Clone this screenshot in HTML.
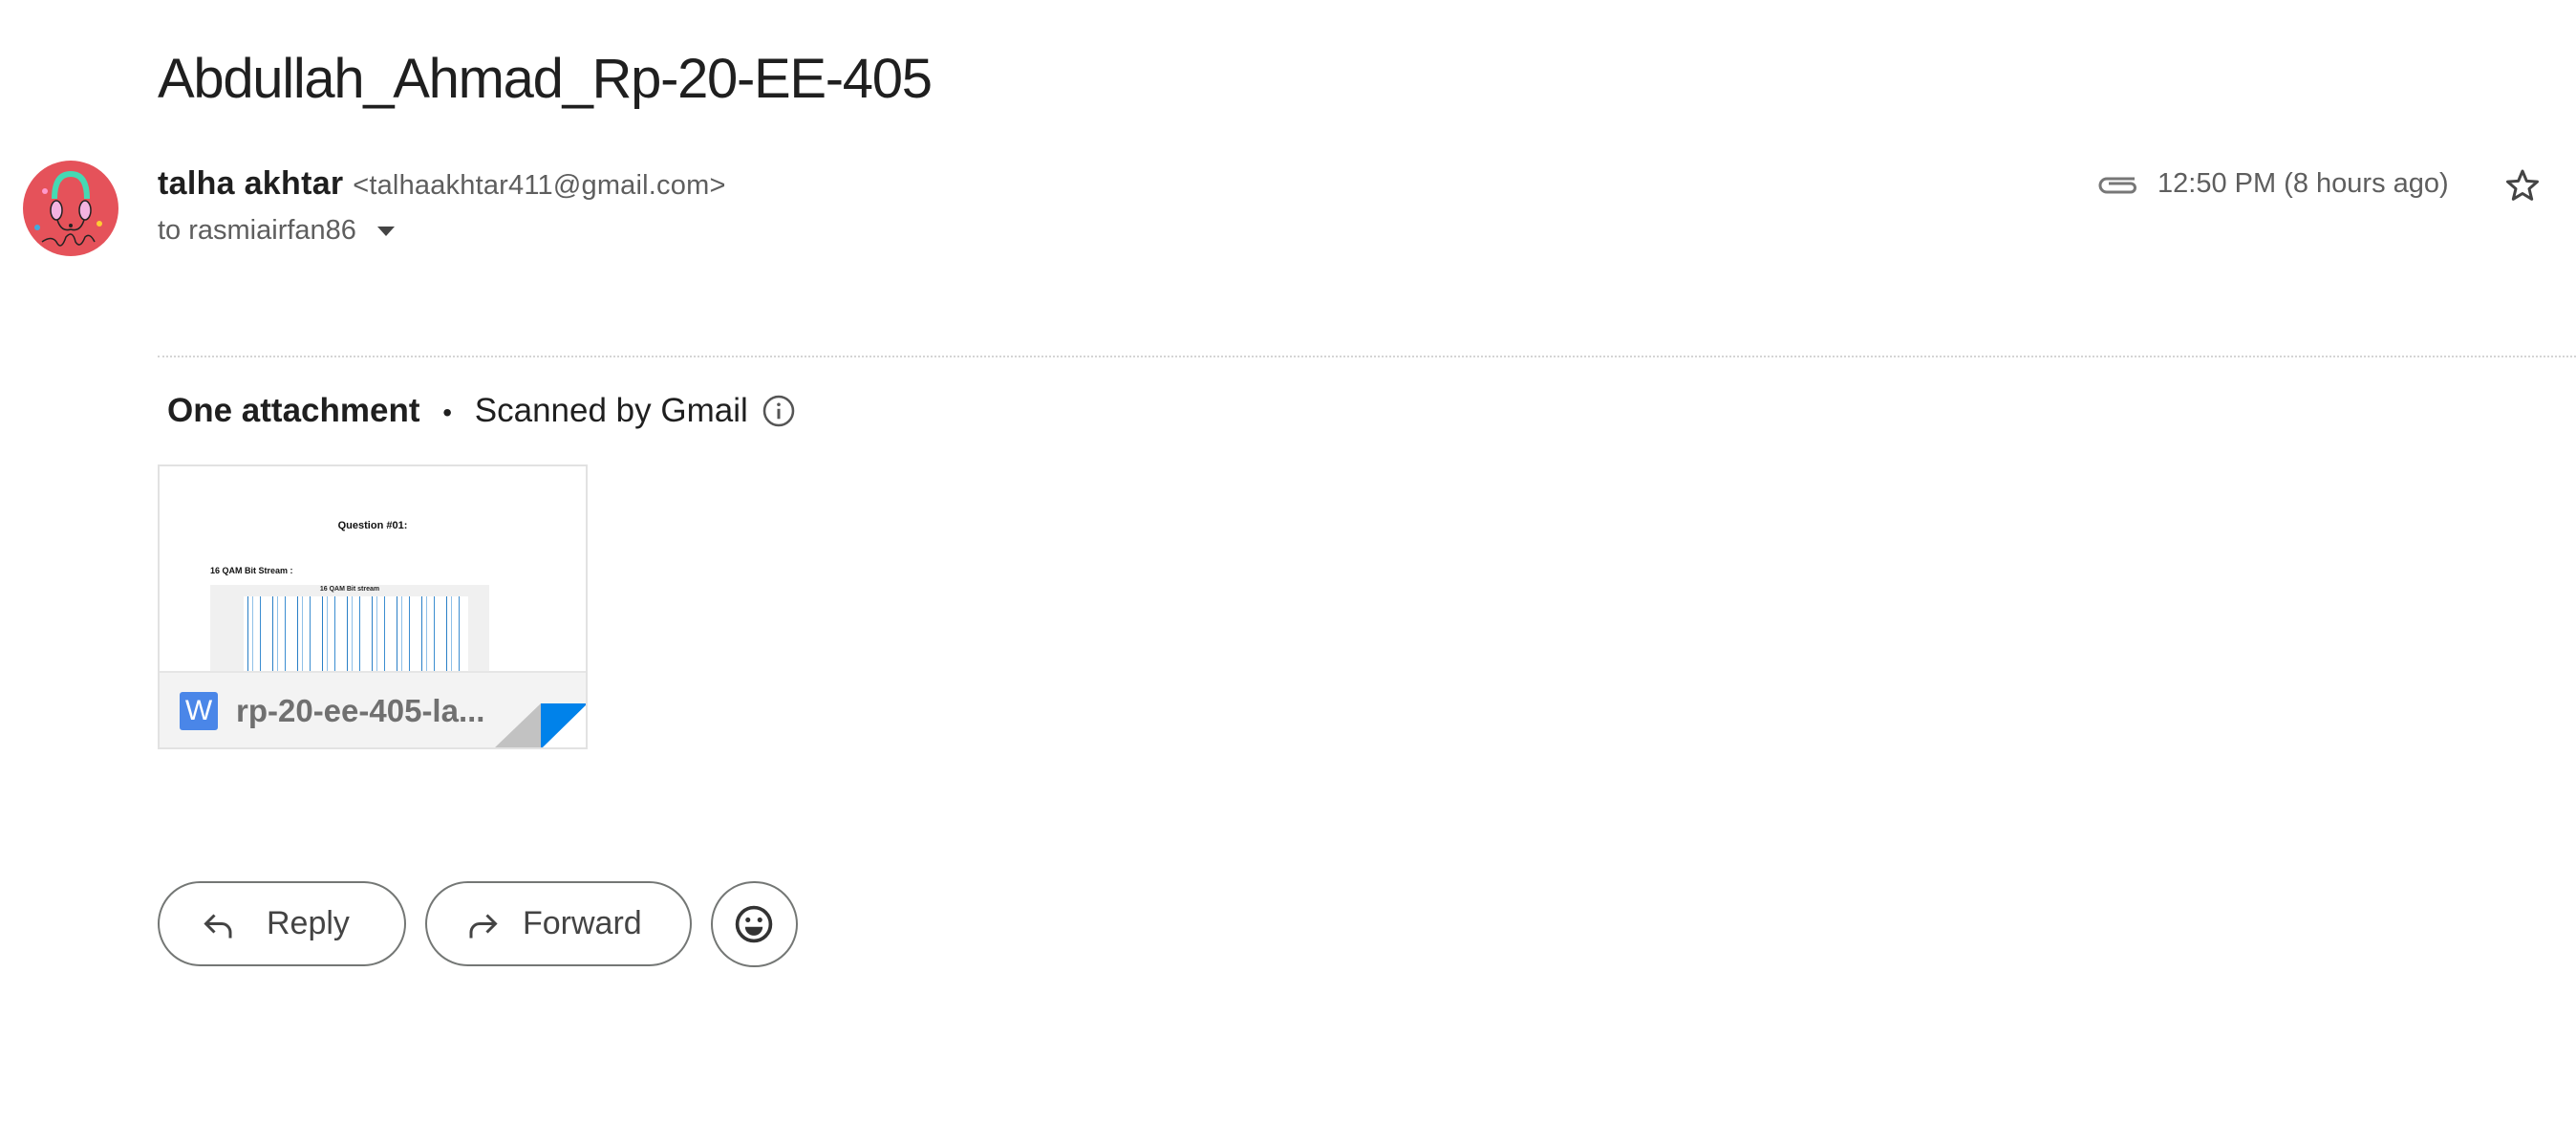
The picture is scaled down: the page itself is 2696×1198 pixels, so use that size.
<!DOCTYPE html>
<html><head><meta charset="utf-8"><style>
*{margin:0;padding:0;box-sizing:border-box}
body{width:2696px;height:1198px;background:#fff;font-family:"Liberation Sans",sans-serif;position:relative;overflow:hidden;color:#1f1f1f}
.a{position:absolute;white-space:nowrap}
.title{left:165px;top:50px;font-size:58px;letter-spacing:-1.3px;color:#1f1f1f;line-height:66px}
.name{left:165px;top:172px;font-size:34px;font-weight:bold;line-height:40px;letter-spacing:0.3px}
.email{font-size:29px;font-weight:normal;color:#5e5e5e;letter-spacing:0.2px}
.to{left:165px;top:224px;font-size:29px;color:#5e5e5e;line-height:34px}
.time{left:2258px;top:175px;font-size:29px;color:#5e5e5e;line-height:34px}
.div{left:165px;top:372px;width:2531px;border-top:2px dotted #d5d5d5}
.att{left:175px;top:410px;font-size:35px;line-height:40px}
.card{left:165px;top:486px;width:450px;height:298px;border:2px solid #e2e2e2;background:#fff;overflow:hidden}
.foot{position:absolute;left:0;top:214px;width:446px;height:82px;background:#f3f3f3;border-top:2px solid #e6e6e6}
.btn{position:absolute;top:922px;height:89px;border:2px solid #747775;border-radius:45px;font-size:34px;color:#444;line-height:85px}
</style></head><body>
<div class="a title">Abdullah_Ahmad_Rp-20-EE-405</div>
<svg class="a" style="left:24px;top:168px" width="100" height="100" viewBox="0 0 100 100">
<circle cx="50" cy="50" r="50" fill="#e5525a"/>
<path d="M33 40 Q33 14 50 14 Q67 14 67 40" stroke="#46d9b3" stroke-width="6" fill="none"/>
<ellipse cx="35" cy="52" rx="6" ry="10" fill="#f3b3e0" stroke="#222" stroke-width="1.5"/>
<ellipse cx="65" cy="52" rx="6" ry="10" fill="#f3b3e0" stroke="#222" stroke-width="1.5"/>
<path d="M36 62 Q40 75 50 72 Q60 75 64 62 M20 85 Q30 78 35 85 Q40 95 45 80 Q52 72 55 85 Q60 93 65 80 Q70 75 75 85" stroke="#222" stroke-width="1.5" fill="none"/>
<circle cx="50" cy="68" r="2" fill="#222"/><circle cx="15" cy="70" r="3" fill="#4ad"/><circle cx="80" cy="66" r="3" fill="#fc3"/><circle cx="23" cy="32" r="3" fill="#f9c"/>
</svg>
<div class="a name">talha akhtar <span class="email">&lt;talhaakhtar411@gmail.com&gt;</span></div>
<div class="a to">to rasmiairfan86 <span style="display:inline-block;width:0;height:0;border-left:9px solid transparent;border-right:9px solid transparent;border-top:10px solid #444;margin-left:14px;vertical-align:middle"></span></div>
<svg class="a" style="left:2194px;top:178px" width="44" height="26" viewBox="0 0 44 26"><path d="M40 9 H11 A7 7 0 0 0 11 23 H36 A4.5 4.5 0 0 0 36 14 H13" fill="none" stroke="#777" stroke-width="3"/></svg>
<div class="a time">12:50 PM (8 hours ago)</div>
<svg class="a" style="left:2620px;top:174px" width="40" height="40" viewBox="0 0 24 24"><path d="M12 3 L14.6 9.2 L21.3 9.7 L16.2 14.1 L17.8 20.6 L12 17.1 L6.2 20.6 L7.8 14.1 L2.7 9.7 L9.4 9.2 Z" fill="none" stroke="#444" stroke-width="1.8" stroke-linejoin="round"/></svg>
<div class="a div"></div>
<div class="a att"><b>One attachment</b> <span style="margin:0 14px;font-size:28px">•</span> Scanned by Gmail</div>
<svg class="a" style="left:797px;top:412px" width="36" height="36" viewBox="0 0 24 24"><circle cx="12" cy="12" r="10" fill="none" stroke="#555" stroke-width="1.7"/><rect x="11" y="10.5" width="2" height="7" fill="#555"/><circle cx="12" cy="7.5" r="1.2" fill="#555"/></svg>
<div class="a card">
<div class="a" style="left:0;width:446px;top:56px;text-align:center;font-size:11px;font-weight:bold;color:#111">Question #01:</div>
<div class="a" style="left:53px;top:104px;font-size:9px;font-weight:bold;color:#111">16 QAM Bit Stream :</div>
<div class="a" style="left:53px;top:124px;width:292px;height:100px;background:#f0f0f0">
<div class="a" style="left:0;width:292px;top:1px;text-align:center;font-size:7px;font-weight:bold">16 QAM Bit stream</div>
<div class="a" style="left:35px;top:12px;width:235px;height:90px;background:repeating-linear-gradient(90deg,#fff 0 4px,#2a7fc6 4px 5px,#fff 5px 9px,#8fc0e8 9px 10px,#fff 10px 17px,#3b8dd0 17px 18px,#fff 18px 26px)"></div>
</div>
<div class="foot">
<div class="a" style="left:21px;top:20px;width:40px;height:40px;background:#4a86e8;border-radius:3px;color:#fff;font-size:30px;line-height:40px;text-align:center">W</div>
<div class="a" style="left:80px;top:18px;font-size:33px;font-weight:bold;color:#707070;line-height:44px">rp-20-ee-405-la...</div>
</div>
<svg class="a" style="left:349px;top:248px" width="99" height="48" viewBox="0 0 99 48"><path d="M50 0 L50 48 L0 48 Z" fill="#c2c2c2"/><path d="M50 0 L99 0 L50 48 Z" fill="#0082ea"/><path d="M99 0 L99 48 L50 48 Z" fill="#fff"/></svg>
</div>
<div class="btn" style="left:165px;width:260px"><svg class="a" style="left:42px;top:26px" width="40" height="36" viewBox="0 0 24 24"><path d="M9 5 L3 11 L9 17 M3.5 11 H14 A6 6 0 0 1 20 17 V21" fill="none" stroke="#444" stroke-width="2"/></svg><span class="a" style="left:112px">Reply</span></div>
<div class="btn" style="left:445px;width:279px"><svg class="a" style="left:38px;top:26px" width="40" height="36" viewBox="0 0 24 24"><path d="M15 5 L21 11 L15 17 M20.5 11 H10 A6 6 0 0 0 4 17 V21" fill="none" stroke="#444" stroke-width="2"/></svg><span class="a" style="left:100px">Forward</span></div>
<div class="btn" style="left:744px;width:91px;height:90px"><svg class="a" style="left:21px;top:21px" width="44" height="44" viewBox="0 0 24 24"><circle cx="12" cy="12" r="9.5" fill="none" stroke="#333" stroke-width="2"/><circle cx="8.6" cy="9.5" r="1.4" fill="#333"/><circle cx="15.4" cy="9.5" r="1.4" fill="#333"/><path d="M7 13.5 H17 A5 5 0 0 1 7 13.5 Z" fill="#333"/></svg></div>
</body></html>
